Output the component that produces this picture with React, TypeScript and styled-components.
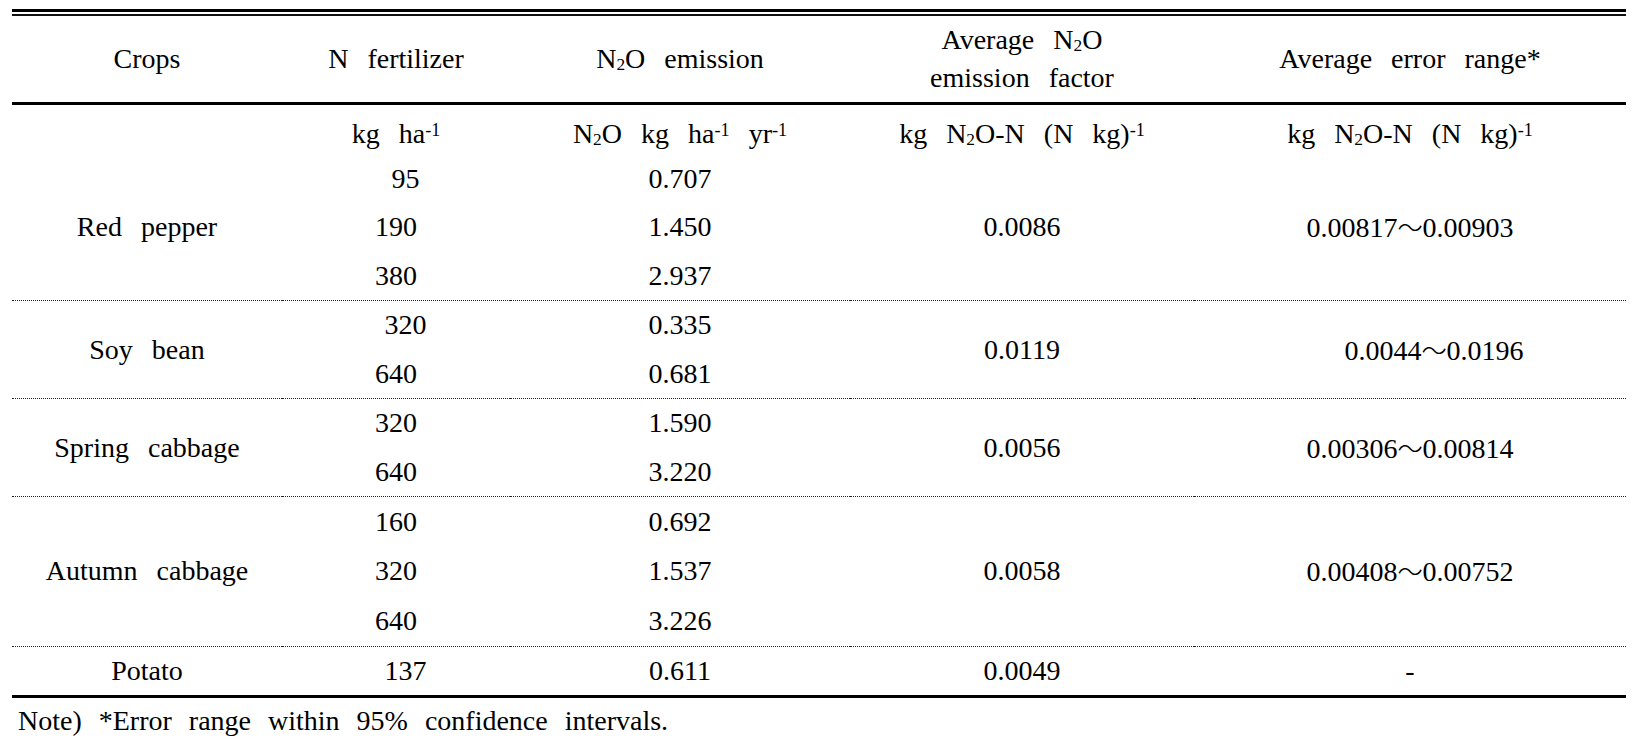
import React from "react";
import styled, { createGlobalStyle } from "styled-components";

type Group = {
  crop: string;
  rows: { n: string; emission: string }[];
  factor: string;
  range: [string, string] | string;
  rangeIndent?: number;
  rowHeight?: number;
};

const GROUPS: Group[] = [
  {
    crop: "Red pepper",
    rows: [
      { n: " 95", emission: "0.707" },
      { n: "190", emission: "1.450" },
      { n: "380", emission: "2.937" },
    ],
    factor: "0.0086",
    range: ["0.00817", "0.00903"],
  },
  {
    crop: "Soy bean",
    rows: [
      { n: " 320", emission: "0.335" },
      { n: "640", emission: "0.681" },
    ],
    factor: "0.0119",
    range: ["0.0044", "0.0196"],
    rangeIndent: 48,
  },
  {
    crop: "Spring cabbage",
    rows: [
      { n: "320", emission: "1.590" },
      { n: "640", emission: "3.220" },
    ],
    factor: "0.0056",
    range: ["0.00306", "0.00814"],
  },
  {
    crop: "Autumn cabbage",
    rows: [
      { n: "160", emission: "0.692" },
      { n: "320", emission: "1.537" },
      { n: "640", emission: "3.226" },
    ],
    factor: "0.0058",
    range: ["0.00408", "0.00752"],
    rowHeight: 49.5,
  },
  {
    crop: "Potato",
    rows: [{ n: " 137", emission: "0.611" }],
    factor: "0.0049",
    range: "-",
  },
];

const COLUMNS = [270, 228, 340, 344, 432];

const App: React.FC = () => {
  const n2o = (
    <>
      N<Sub>2</Sub>O
    </>
  );

  const renderRange = (range: Group["range"]) =>
    typeof range === "string" ? (
      range
    ) : (
      <>
        {range[0]}
        <Tilde>～</Tilde>
        {range[1]}
      </>
    );

  return (
    <Page>
      <GlobalStyle />
      <TopRule />
      <Table>
        <colgroup>
          {COLUMNS.map((w, i) => (
            <col key={i} style={{ width: w }} />
          ))}
        </colgroup>
        <Head>
          <tr>
            <Th>Crops</Th>
            <Th>N fertilizer</Th>
            <Th>{n2o} emission</Th>
            <Th>
              Average {n2o}
              <br />
              emission factor
            </Th>
            <Th>Average error range*</Th>
          </tr>
        </Head>
        {GROUPS.map((g, gi) => (
          <Group key={g.crop} $last={gi === GROUPS.length - 1}>
            {gi === 0 && (
              <tr>
                <UnitTd />
                <UnitTd>
                  kg ha<Sup>-1</Sup>
                </UnitTd>
                <UnitTd>
                  {n2o} kg ha<Sup>-1</Sup> yr<Sup>-1</Sup>
                </UnitTd>
                <UnitTd>
                  kg {n2o}-N (N kg)<Sup>-1</Sup>
                </UnitTd>
                <UnitTd>
                  kg {n2o}-N (N kg)<Sup>-1</Sup>
                </UnitTd>
              </tr>
            )}
            {g.rows.map((r, ri) => (
              <tr key={ri}>
                {ri === 0 && <Td rowSpan={g.rows.length}>{g.crop}</Td>}
                <Td $h={g.rowHeight}>{r.n}</Td>
                <Td $h={g.rowHeight}>{r.emission}</Td>
                {ri === 0 && <Td rowSpan={g.rows.length}>{g.factor}</Td>}
                {ri === 0 && (
                  <Td rowSpan={g.rows.length} $indent={g.rangeIndent}>
                    {renderRange(g.range)}
                  </Td>
                )}
              </tr>
            ))}
          </Group>
        ))}
      </Table>
      <Note>Note) *Error range within 95% confidence intervals.</Note>
    </Page>
  );
};

const GlobalStyle = createGlobalStyle`
  html, body {
    margin: 0;
    padding: 0;
    background: #fff;
  }
  body {
    font-family: "Liberation Serif", "Times New Roman", "Noto Sans CJK KR", serif;
    color: #000;
  }
`;

const Page = styled.div`
  padding: 9px 0 0 12px;
`;

const TopRule = styled.div`
  width: 1614px;
  height: 7px;
  box-sizing: border-box;
  border-top: 3px solid #000;
  border-bottom: 2px solid #111;
`;

const Table = styled.table`
  width: 1614px;
  border-collapse: collapse;
  table-layout: fixed;
  font-size: 28px;
  word-spacing: 12px;
`;

const Head = styled.thead`
  border-bottom: 3px solid #000;
`;

const Th = styled.th`
  height: 86px;
  padding: 0;
  font-weight: normal;
  text-align: center;
  vertical-align: middle;
  line-height: 38px;
`;

const Group = styled.tbody<{ $last?: boolean }>`
  border-bottom: ${(p) => (p.$last ? "3px solid #000" : "1px dotted #222")};
`;

const Td = styled.td<{ $h?: number; $indent?: number }>`
  height: ${(p) => p.$h ?? 48.5}px;
  padding: 0 0 0 ${(p) => p.$indent ?? 0}px;
  text-align: center;
  vertical-align: middle;
  white-space: pre;
  line-height: 32px;
`;

const UnitTd = styled(Td)`
  height: 41.5px;
  padding-top: 8px;
`;

const Sub = styled.sub`
  font-size: 0.62em;
  vertical-align: -2px;
  line-height: 0;
`;

const Sup = styled.sup`
  font-size: 0.65em;
  vertical-align: 7px;
  line-height: 0;
`;

const Tilde = styled.span`
  font-family: "Noto Sans CJK KR", sans-serif;
  font-weight: 300;
  font-size: 0.9em;
  word-spacing: 0;
`;

const Note = styled.div`
  padding: 7px 0 0 6px;
  font-size: 28px;
  word-spacing: 10px;
  line-height: 32px;
`;

export default App;
